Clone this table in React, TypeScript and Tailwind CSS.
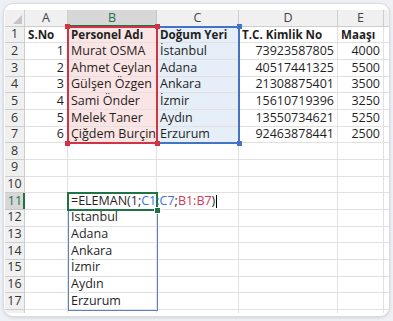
import React from "react";

const COLS = ["A", "B", "C", "D", "E"];
type Cell = { v: string; right?: boolean; bold?: boolean };

const rows: Cell[][] = [
  [{ v: "S.No", bold: true }, { v: "Personel Adı", bold: true }, { v: "Doğum Yeri", bold: true }, { v: "T.C. Kimlik No", bold: true }, { v: "Maaşı", bold: true }],
  [{ v: "1", right: true }, { v: "Murat OSMA" }, { v: "İstanbul" }, { v: "73923587805", right: true }, { v: "4000", right: true }],
  [{ v: "2", right: true }, { v: "Ahmet Ceylan" }, { v: "Adana" }, { v: "40517441325", right: true }, { v: "5500", right: true }],
  [{ v: "3", right: true }, { v: "Gülşen Özgen" }, { v: "Ankara" }, { v: "21308875401", right: true }, { v: "3500", right: true }],
  [{ v: "4", right: true }, { v: "Sami Önder" }, { v: "İzmir" }, { v: "15610719396", right: true }, { v: "3250", right: true }],
  [{ v: "5", right: true }, { v: "Melek Taner" }, { v: "Aydın" }, { v: "13550734621", right: true }, { v: "5250", right: true }],
  [{ v: "6", right: true }, { v: "Çiğdem Burçin" }, { v: "Erzurum" }, { v: "92463878441", right: true }, { v: "2500", right: true }],
  [],
  [],
  [],
  [],
  [{ v: "" }, { v: "İstanbul" }],
  [{ v: "" }, { v: "Adana" }],
  [{ v: "" }, { v: "Ankara" }],
  [{ v: "" }, { v: "İzmir" }],
  [{ v: "" }, { v: "Aydın" }],
  [{ v: "" }, { v: "Erzurum" }],
];

function Handle({ cls }: { cls: string }) {
  return <div className={`absolute w-[5px] h-[5px] ${cls}`} />;
}

export default function App() {
  return (
    <div
      className="w-[393px] h-[321px] bg-[#edf0f4] p-[3px]"
      style={{ fontFamily: '"Open Sans", "Liberation Sans", sans-serif' }}
    >
      <div className="w-[387px] h-[314px] rounded-[10px] border border-[#d9dde4] bg-white shadow-[0_1px_3px_rgba(0,0,0,0.12)] overflow-hidden pt-[6px] pl-[1px]">
        <div className="relative h-[303px] overflow-hidden">
          <div className="grid grid-cols-[20px_43px_89px_82px_99px_46px_1fr] text-[12.5px] font-medium leading-none text-[#1f1f1f]">
            {/* header row */}
            <div className="relative h-[16.67px] bg-[#f0f0f0] border-r border-b border-[#cdcdcd]">
              <div className="absolute right-[2px] bottom-[2px] w-0 h-0 border-l-[9px] border-l-transparent border-b-[9px] border-b-[#c4c4c4]" />
            </div>
            {COLS.map((c) => (
              <div
                key={c}
                className={
                  c === "B"
                    ? "h-[16.67px] bg-[#d7d7d7] border-r border-[#c6c6c6] shadow-[inset_0_-2px_0_#217346] text-[#217346] flex items-center justify-center"
                    : "h-[16.67px] bg-[#f0f0f0] border-r border-b border-[#cdcdcd] text-[#444] flex items-center justify-center"
                }
              >
                {c}
              </div>
            ))}
            <div className="h-[16.67px] bg-[#f0f0f0] border-b border-[#cdcdcd]" />

            {rows.map((r, i) => {
              const n = i + 1;
              const active = n === 11;
              return (
                <React.Fragment key={n}>
                  <div
                    className={
                      active
                        ? "h-[16.67px] bg-[#d7d7d7] border-b border-[#c6c6c6] shadow-[inset_-2px_0_0_#217346] text-[#217346] flex items-center justify-center"
                        : "h-[16.67px] bg-[#f0f0f0] border-r border-b border-[#cdcdcd] text-[#333] flex items-center justify-center"
                    }
                  >
                    {n}
                  </div>
                  {COLS.map((c, ci) => {
                    const cell = r[ci];
                    let bg = "";
                    if (n <= 7 && c === "B") bg = "bg-[#fbe4e4]";
                    if (n <= 7 && c === "C") bg = "bg-[#e6eef8]";
                    return (
                      <div
                        key={c}
                        className={`h-[16.67px] border-r border-b border-[#e1e1e1] px-[3px] flex items-center whitespace-nowrap ${bg} ${
                          cell?.right ? "justify-end" : "justify-start"
                        } ${cell?.bold ? "font-bold text-[11.6px]" : ""}`}
                      >
                        {cell?.v}
                      </div>
                    );
                  })}
                  <div className="h-[16.67px] border-b border-[#e1e1e1]" />
                </React.Fragment>
              );
            })}
            {/* partial row */}
            <div className="h-[16.67px] bg-[#f0f0f0] border-r border-[#cdcdcd]" />
            {COLS.map((c) => (
              <div key={c} className="h-[16.67px] border-r border-[#e1e1e1]" />
            ))}
            <div className="h-[16.67px]" />
          </div>

          {/* blue reference range C1:C7 */}
          <div className="absolute left-[151px] top-[15.67px] w-[84px] h-[118.67px] border-2 border-[#4472c4]" />
          <Handle cls="left-[232px] top-[14px] bg-[#4472c4]" />
          <Handle cls="left-[232px] top-[131px] bg-[#4472c4]" />

          {/* red reference range B1:B7 */}
          <div className="absolute left-[62px] top-[15.67px] w-[91px] h-[118.67px] border-2 border-[#cf3444]" />
          <Handle cls="left-[60px] top-[14px] bg-[#cf3444]" />
          <Handle cls="left-[150px] top-[14px] bg-[#cf3444]" />
          <Handle cls="left-[60px] top-[131px] bg-[#cf3444]" />
          <Handle cls="left-[150px] top-[131px] bg-[#cf3444]" />

          {/* spill range */}
          <div className="absolute left-[63px] top-[200px] w-[90px] h-[101px] border border-[#5b7fc9]" />

          {/* active cell B11 */}
          <div className="absolute left-[62px] top-[182.33px] w-[91px] h-[18.67px] border-2 border-[#217346]" />
          <div className="absolute left-[150px] top-[198px] w-[5px] h-[5px] bg-[#217346] outline outline-1 outline-white" />
          <div className="absolute left-[66px] top-[183.33px] h-[16.67px] flex items-center whitespace-nowrap text-[12.5px] font-medium leading-none text-[#1f1f1f]">
            <span>=ELEMAN(1;</span>
            <span className="text-[#3b73d6]">C1:C7</span>
            <span>;</span>
            <span className="text-[#d0385a]">B1:B7</span>
            <span>)</span>
            <span className="ml-[1px] w-px h-[13px] bg-black" />
          </div>
        </div>
      </div>
    </div>
  );
}
